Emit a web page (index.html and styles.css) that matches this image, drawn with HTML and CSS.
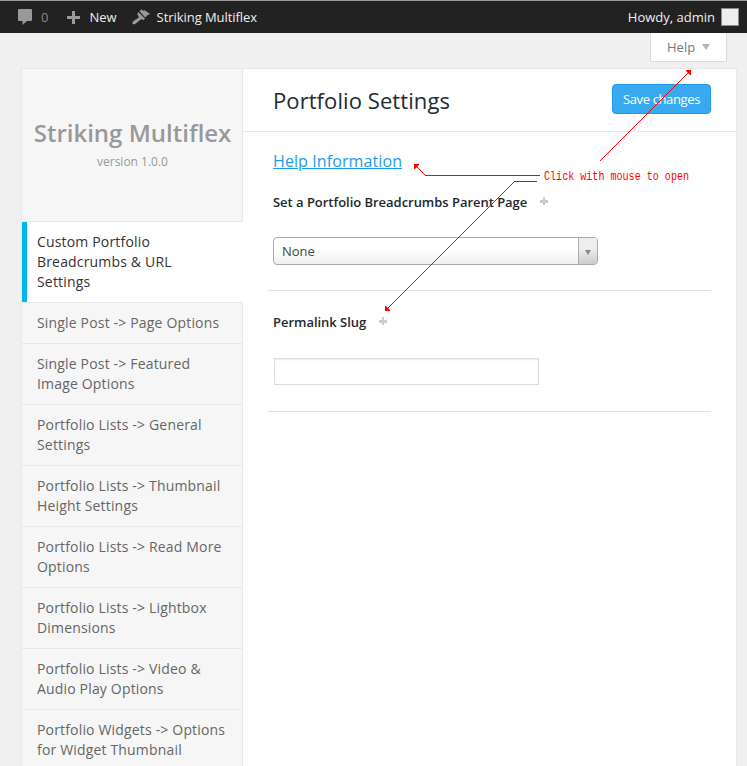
FILE: index.html
```html
<!DOCTYPE html>
<html lang="en">
<head>
<meta charset="utf-8">
<title>Portfolio Settings</title>
<link rel="stylesheet" href="styles.css">
</head>
<body>
<header class="adminbar">
  <div class="bar-item comments">
    <svg width="14" height="16" viewBox="0 0 14 16"><path d="M1 0h12q1 0 1 1v10q0 1-1 1H9L4.500 16V12H1q-1 0-1-1V1q0-1 1-1z"/></svg>
    <span>0</span>
  </div>
  <div class="bar-item new">
    <svg width="13" height="13" viewBox="0 0 13 13"><path d="M5 0h3v5h5v3H8v5H5V8H0V5h5z"/></svg>
    <span>New</span>
  </div>
  <div class="bar-item theme">
    <svg width="19" height="16" viewBox="0 0 19 16"><path d="M7.500 2.200 9.600 0.200 11.300 1.900 12.200 1.100 18.200 5.100 15.300 6.200 13.300 8.600z"/><path d="M6.500 3.200 13 9.500 11.600 10.900 9.100 10.200 3.300 14.900Q1.200 16 .4 14.500 0 13 1.800 11.800L6.900 8.400 5.200 4.600z"/></svg>
    <span>Striking Multiflex</span>
  </div>
  <div class="account"><span>Howdy, admin</span><i class="avatar"></i></div>
</header>

<div class="screen-meta"><a class="help-tab">Help<i class="caret"></i></a></div>

<div class="panel">
  <aside class="sidebar">
    <div class="brand">
      <div class="brand-name">Striking Multiflex</div>
      <div class="brand-version">version 1.0.0</div>
    </div>
    <ul class="menu">
      <li class="active">Custom Portfolio<br>Breadcrumbs &amp; URL<br>Settings</li>
      <li>Single Post -&gt; Page Options</li>
      <li>Single Post -&gt; Featured<br>Image Options</li>
      <li>Portfolio Lists -&gt; General<br>Settings</li>
      <li>Portfolio Lists -&gt; Thumbnail<br>Height Settings</li>
      <li>Portfolio Lists -&gt; Read More<br>Options</li>
      <li>Portfolio Lists -&gt; Lightbox<br>Dimensions</li>
      <li>Portfolio Lists -&gt; Video &amp;<br>Audio Play Options</li>
      <li>Portfolio Widgets -&gt; Options<br>for Widget Thumbnail</li>
    </ul>
  </aside>
  <main class="content">
    <div class="content-head">
      <h1>Portfolio Settings</h1>
      <button class="save">Save changes</button>
    </div>
    <div class="help-row"><a class="help-link">Help Information</a></div>
    <section class="option">
      <div class="label"><span>Set a Portfolio Breadcrumbs Parent Page</span><i class="plus"></i></div>
      <div class="select"><span>None</span><b class="arrow"><i></i></b></div>
    </section>
    <section class="option slug">
      <div class="label"><span>Permalink Slug</span><i class="plus"></i></div>
      <input class="field" type="text" aria-label="Permalink Slug">
    </section>
  </main>
</div>

<svg class="notes" width="747" height="766" viewBox="0 0 747 766">
  <g class="lines">
    <path d="M599.500 161.500 688 73"/>
    <path d="M417 167 425.500 175.500"/>
    <path d="M514.500 181.500 388 308"/>
  </g>
  <path class="rule" d="M425 175h115v1H425zM514 181h23v1h-23z"/>
  <path class="tip" d="M686 70h5v5h-1l-4-4zM414 164h5v1l-4 4h-1zM385 306h1l4 4v1h-5z"/>
  <text x="544" y="180" textLength="145" lengthAdjust="spacingAndGlyphs">Click with mouse to open</text>
</svg>
</body>
</html>
```

FILE: styles.css
```css
* { box-sizing: border-box; }
html, body { height: 766px; overflow: hidden; }
body {
  margin: 0;
  background: #f0f0f0;
  font-family: "Open Sans", "Noto Sans", sans-serif;
  font-size: 13px;
  color: #333;
}

.adminbar {
  display: flex;
  align-items: center;
  height: 33px;
  padding: 0 8px 0 18px;
  border-top: 1px solid #999;
  background: #222;
  color: #eee;
  line-height: 32px;
}
.bar-item { display: flex; align-items: center; }
.bar-item svg { fill: #999; }
.comments { color: #888; gap: 9px; }
.new { margin-left: 19px; gap: 9px; }
.theme { margin-left: 15px; gap: 6px; letter-spacing: -.06px; }
.account { display: flex; align-items: center; gap: 6px; margin-left: auto; }
.avatar { width: 18px; height: 18px; border: 1px solid #8c8c8c; background: #eee; }

.screen-meta { display: flex; justify-content: flex-end; height: 35px; padding-right: 20px; }
.help-tab {
  display: flex;
  align-items: center;
  width: 77px;
  height: 29px;
  padding-left: 16px;
  border: 1px solid #ddd;
  border-top: 0;
  background: #fff;
  color: #777;
}
.caret { margin-left: 7px; border: 4px solid transparent; border-top: 6px solid #b4b4b4; border-bottom: 0; }

.panel { display: flex; width: 716px; height: 720px; margin-left: 21px; border: 1px solid #e8e8e8; background: #fff; }
.sidebar { width: 221px; flex: none; color: #666; }
.brand {
  height: 153px;
  padding: 48px 0 0 1px;
  border-right: 1px solid #e8e8e8;
  border-bottom: 1px solid #e8e8e8;
  background: #f6f6f6;
  color: #999;
  text-align: center;
}
.brand-name { font-size: 24px; font-weight: 600; line-height: 32px; white-space: nowrap; }
.brand-version { font-size: 12px; line-height: 20px; margin-top: 3px; }
.menu { margin: 0; padding: 0; list-style: none; }
.menu li {
  padding: 10px 0 10px 15px;
  border-right: 1px solid #e8e8e8;
  border-bottom: 1px solid #e8e8e8;
  background: #f6f6f6;
  font-size: 14px;
  line-height: 20px;
  letter-spacing: .17px;
  white-space: nowrap;
}
.menu .active { position: relative; border-right-color: #fff; background: #fff; color: #333; }
.menu .active::before { content: ""; position: absolute; left: 0; top: 0; bottom: 0; width: 5px; background: #00b9eb; }

.content { flex: 1; }
.content-head {
  display: flex;
  align-items: center;
  justify-content: space-between;
  height: 63px;
  padding: 0 25px 2px 30px;
  border-bottom: 1px solid #e8e8e8;
}
h1 { margin: 2px 0 0; color: #222b33; font-size: 22px; font-weight: 400; line-height: 32px; letter-spacing: .08px; }
.save {
  width: 99px;
  height: 30px;
  padding: 0;
  border: 1px solid #1e98ea;
  border-radius: 4px;
  background: #38aaf2;
  color: #fff;
  font: 13px "Open Sans", sans-serif;
  letter-spacing: -.36px;
}
.help-row { height: 40px; padding: 17px 0 0 30px; line-height: 24px; }
.help-link { color: #1e9aee; font-size: 16px; letter-spacing: .1px; text-decoration: underline; }
.option { height: 119px; margin: 0 25px 0 25px; padding: 20px 0 0 5px; border-bottom: 1px solid #e2e2e2; }
.slug { height: 121px; padding-top: 21px; }
.label { display: flex; align-items: center; gap: 13px; height: 20px; color: #23282d; font-weight: 600; letter-spacing: -.03px; }
.plus {
  width: 8px;
  height: 8px;
  margin-top: -2px;
  background: linear-gradient(#ccc, #ccc) 3px 0 / 2px 8px no-repeat, linear-gradient(#ccc, #ccc) 0 3px / 8px 3px no-repeat;
}
.select {
  display: flex;
  justify-content: space-between;
  width: 325px;
  height: 28px;
  margin-top: 25px;
  padding-left: 8px;
  border: 1px solid #aaa;
  border-radius: 4px;
  background: linear-gradient(#fff 20%, #fefefe 50%, #eee);
  color: #444;
  line-height: 27px;
  overflow: hidden;
}
.arrow { display: flex; width: 19px; align-items: center; justify-content: center; border-left: 1px solid #aaa; background: linear-gradient(#eee 40%, #ccc); }
.arrow i { margin-top: 2px; border: 3px solid transparent; border-top: 5px solid #888; border-bottom: 0; }
.field {
  display: block;
  width: 265px;
  height: 27px;
  margin: 26px 0 0 1px;
  border: 1px solid #ddd;
  background: #fff;
  box-shadow: inset 0 1px 2px rgba(0, 0, 0, .07);
}

.notes { position: absolute; left: 0; top: 0; pointer-events: none; }
.lines { fill: none; stroke: #f00; stroke-width: 1; shape-rendering: crispEdges; }
.rule, .tip { fill: #f00; }
.notes text { fill: #f00; font: 12px "Liberation Mono", monospace; }
```
